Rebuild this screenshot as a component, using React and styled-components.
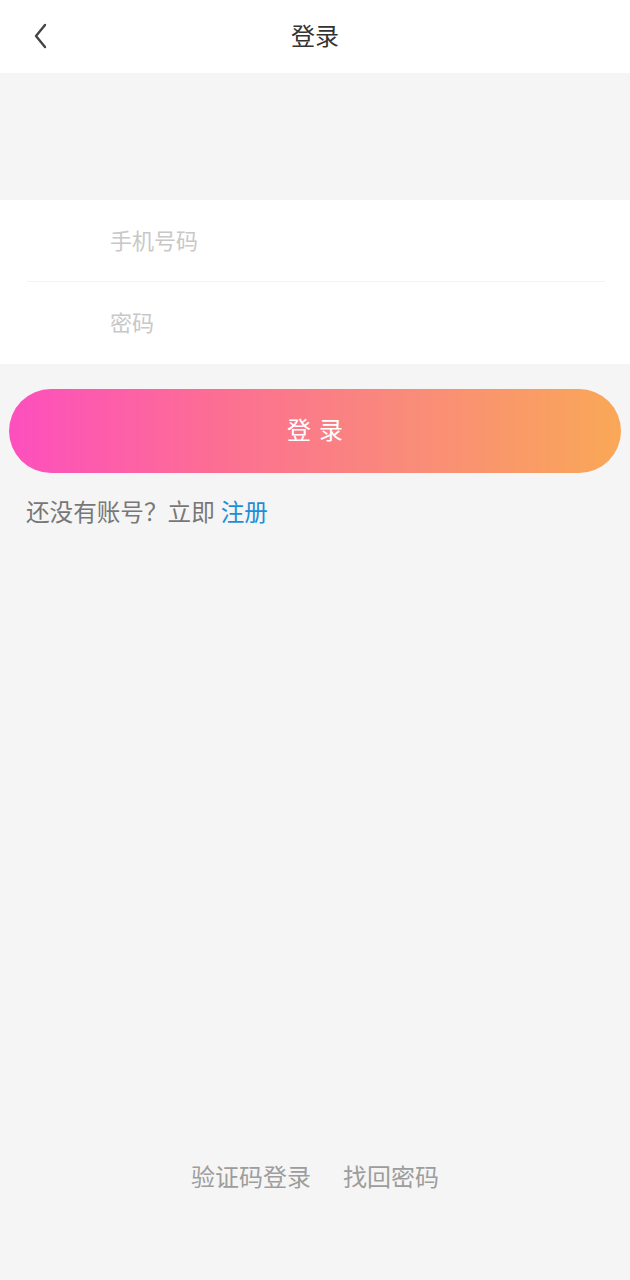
import React from "react";
import styled, { createGlobalStyle } from "styled-components";

const GlobalStyle = createGlobalStyle`
	html, body {
		margin: 0;
		padding: 0;
		background: #f5f5f5;
		font-family: "Noto Sans CJK SC", "Noto Sans", sans-serif;
	}
	* {
		box-sizing: border-box;
	}
`;

const Page = styled.div`
	width: 630px;
	height: 1280px;
	display: flex;
	flex-direction: column;
	background: #f5f5f5;
`;

const Header = styled.div`
	height: 73px;
	background: #ffffff;
	display: grid;
	grid-template-columns: 80px 1fr 80px;
	align-items: center;
`;

const BackButton = styled.div`
	display: flex;
	align-items: center;
	padding-left: 30px;
	padding-bottom: 2px;
	height: 100%;
`;

const Title = styled.h1`
	margin: 0 0 4px 0;
	text-align: center;
	font-size: 24px;
	font-weight: 400;
	color: #333;
`;

const Form = styled.div`
	margin-top: 127px;
	background: #ffffff;
	padding: 0 25px 0 27px;
`;

const Field = styled.div`
	height: 82px;
	display: flex;
	align-items: center;
	padding-left: 83px;
	padding-bottom: 4px;
	border-bottom: ${(p) => (p.last ? "none" : "1px solid #f2f2f2")};
`;

const Input = styled.input`
	border: none;
	outline: none;
	background: transparent;
	width: 100%;
	font-family: inherit;
	font-size: 22px;
	color: #333;
	padding: 0;
	&::placeholder {
		color: #c8c8c8;
	}
`;

const SubmitButton = styled.button`
	margin: 25px 9px 0 9px;
	height: 84px;
	padding: 0 0 5px 0;
	border: none;
	border-radius: 42px;
	background: linear-gradient(to right, #fd4fbe, #fc6f92 35%, #f98b7a 65%, #f9a857);
	color: #ffffff;
	font-family: inherit;
	font-size: 24px;
	letter-spacing: 8px;
	text-indent: 8px;
	cursor: pointer;
`;

const RegisterLine = styled.p`
	margin: 23px 0 0 26px;
	font-size: 23.6px;
	color: #777;
	line-height: 30px;
`;

const Link = styled.a`
	color: #1e8fd6;
	text-decoration: none;
	margin-left: 6px;
`;

const Spacer = styled.div`
	flex: 1;
`;

const BottomLinks = styled.div`
	display: flex;
	justify-content: center;
	gap: 32px;
	padding-bottom: 87px;
`;

const BottomLink = styled.span`
	font-size: 24px;
	color: #9d9d9d;
	line-height: 34px;
`;

export default function App() {
	return (
		<>
			<GlobalStyle />
			<Page>
				<Header>
					<BackButton>
						<svg width="20" height="28" viewBox="0 0 20 28" fill="none">
							<path
								d="M15 3 L6 14 L15 25"
								stroke="#444"
								strokeWidth="2.4"
								strokeLinecap="round"
								strokeLinejoin="round"
							/>
						</svg>
					</BackButton>
					<Title>登录</Title>
					<div />
				</Header>
				<Form>
					<Field>
						<Input placeholder="手机号码" />
					</Field>
					<Field last>
						<Input type="password" placeholder="密码" />
					</Field>
				</Form>
				<SubmitButton>登录</SubmitButton>
				<RegisterLine>
					还没有账号？立即<Link>注册</Link>
				</RegisterLine>
				<Spacer />
				<BottomLinks>
					<BottomLink>验证码登录</BottomLink>
					<BottomLink>找回密码</BottomLink>
				</BottomLinks>
			</Page>
		</>
	);
}
